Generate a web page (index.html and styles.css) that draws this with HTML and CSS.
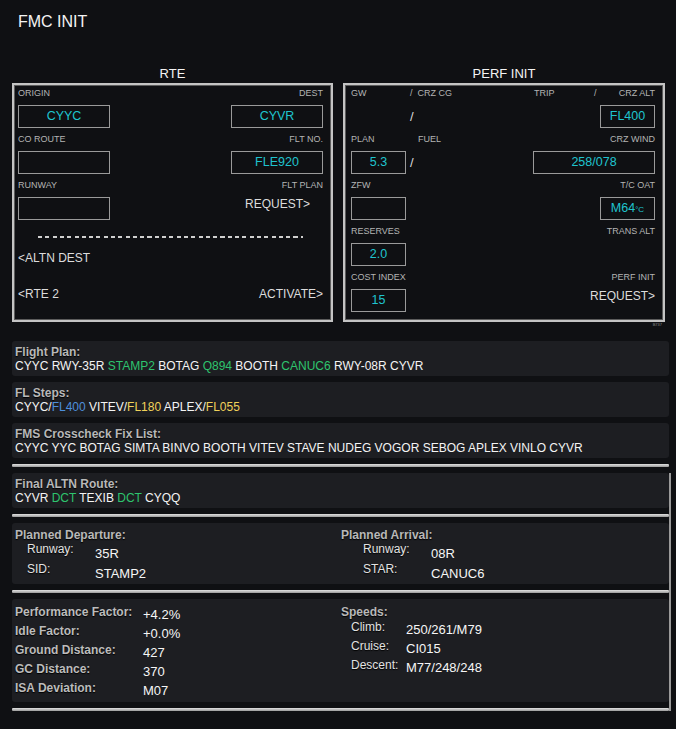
FILE: index.html
```html
<!DOCTYPE html>
<html lang="en">
  <head>
    <meta charset="UTF-8" />
    <meta name="viewport" content="width=device-width, initial-scale=1.0" />
    <title>FMC INIT</title>
    <link rel="stylesheet" href="styles.css">
  </head>
  <body>
    <div class="page">
      <div class="page-head">
        <h1>FMC INIT</h1>
      </div>

      <div class="cdu-row">
        <!-- RTE page -->
        <section class="cdu rte">
          <h2 class="cdu-title">RTE</h2>
          <div class="cdu-box">
            <div class="lbl-row"><span>ORIGIN</span><span>DEST</span></div>
            <div class="fld-row">
              <div class="fld w92">CYYC</div>
              <div class="fld w92">CYVR</div>
            </div>
            <div class="lbl-row"><span>CO ROUTE</span><span>FLT NO.</span></div>
            <div class="fld-row">
              <div class="fld w92"></div>
              <div class="fld w92">FLE920</div>
            </div>
            <div class="lbl-row"><span>RUNWAY</span><span>FLT PLAN</span></div>
            <div class="fld-row">
              <div class="fld w92"></div>
              <div class="act req">REQUEST&gt;</div>
            </div>
            <div class="dash"></div>
            <div class="act-line altn"><span class="act">&lt;ALTN DEST</span></div>
            <div class="act-line rte2"><span class="act">&lt;RTE 2</span><span class="act">ACTIVATE&gt;</span></div>
          </div>
        </section>

        <!-- PERF INIT page -->
        <section class="cdu perf">
          <h2 class="cdu-title">PERF INIT</h2>
          <div class="cdu-box">
            <div class="lbl-row free">
              <span class="c-gw">GW</span><span class="c-cg">/&nbsp; CRZ CG</span><span class="c-trip">TRIP</span><span>/</span><span class="push">CRZ ALT</span>
            </div>
            <div class="fld-row free">
              <span class="slash first">/</span>
              <div class="fld w55 push">FL400</div>
            </div>
            <div class="lbl-row free">
              <span class="c-plan">PLAN</span><span>FUEL</span><span class="push">CRZ WIND</span>
            </div>
            <div class="fld-row free">
              <div class="fld w55">5.3</div>
              <span class="slash">/</span>
              <div class="fld w122 push">258/078</div>
            </div>
            <div class="lbl-row"><span>ZFW</span><span>T/C OAT</span></div>
            <div class="fld-row">
              <div class="fld w55"></div>
              <div class="fld w55">M64<span class="unit">°C</span></div>
            </div>
            <div class="lbl-row"><span>RESERVES</span><span>TRANS ALT</span></div>
            <div class="fld-row">
              <div class="fld w55">2.0</div>
            </div>
            <div class="lbl-row"><span>COST INDEX</span><span>PERF INIT</span></div>
            <div class="fld-row">
              <div class="fld w55">15</div>
              <div class="act">REQUEST&gt;</div>
            </div>
          </div>
          <div class="model">B737</div>
        </section>
      </div>

      <div class="info-list">
        <div class="info">
          <h3>Flight Plan:</h3>
          <p>CYYC RWY-35R <span class="g">STAMP2</span> BOTAG <span class="g">Q894</span> BOOTH <span class="g">CANUC6</span> RWY-08R CYVR</p>
        </div>
        <div class="info">
          <h3>FL Steps:</h3>
          <p>CYYC/<span class="b">FL400</span> VITEV/<span class="y">FL180</span> APLEX/<span class="y">FL055</span></p>
        </div>
        <div class="info">
          <h3>FMS Crosscheck Fix List:</h3>
          <p>CYYC YYC BOTAG SIMTA BINVO BOOTH VITEV STAVE NUDEG VOGOR SEBOG APLEX VINLO CYVR</p>
        </div>
        <div class="bar"></div>

        <div class="lower">
          <div class="info">
            <h3>Final ALTN Route:</h3>
            <p>CYVR <span class="g">DCT</span> TEXIB <span class="g">DCT</span> CYQQ</p>
          </div>
          <div class="bar"></div>

          <div class="info pair proc-box">
            <div>
              <h3>Planned Departure:</h3>
              <dl class="kv proc dep">
                <dt>Runway:</dt><dd>35R</dd>
                <dt>SID:</dt><dd>STAMP2</dd>
              </dl>
            </div>
            <div>
              <h3>Planned Arrival:</h3>
              <dl class="kv proc arr">
                <dt>Runway:</dt><dd>08R</dd>
                <dt>STAR:</dt><dd>CANUC6</dd>
              </dl>
            </div>
          </div>
          <div class="bar"></div>

          <div class="info pair stats-box">
            <dl class="kv stats">
              <dt>Performance Factor:</dt><dd>+4.2%</dd>
              <dt>Idle Factor:</dt><dd>+0.0%</dd>
              <dt>Ground Distance:</dt><dd>427</dd>
              <dt>GC Distance:</dt><dd>370</dd>
              <dt>ISA Deviation:</dt><dd>M07</dd>
            </dl>
            <div>
              <h3>Speeds:</h3>
              <dl class="kv speeds">
                <dt>Climb:</dt><dd>250/261/M79</dd>
                <dt>Cruise:</dt><dd>CI015</dd>
                <dt>Descent:</dt><dd>M77/248/248</dd>
              </dl>
            </div>
          </div>
          <div class="bar"></div>
        </div>
      </div>
    </div>
  </body>
</html>
```

FILE: styles.css
```css
body {
  margin: 0;
  background: #0f1013;
  color: #eeeeee;
  font-family: "Liberation Sans", Arial, sans-serif;
}

.page {
  padding: 0 5px 0 12px;
}

.page-head {
  height: 66px;
}
.page-head h1 {
  margin: 0;
  padding: 12px 0 0 6px;
  font-size: 16px;
  font-weight: normal;
  line-height: 20px;
  color: #f4f4f4;
}

/* CDU pages */
.cdu-row {
  display: flex;
  gap: 10px;
}
.cdu.rte {
  width: 321px;
}
.cdu.perf {
  width: 322px;
}
.cdu-title {
  margin: 0 0 1px;
  font-size: 13px;
  font-weight: normal;
  line-height: 16px;
  text-align: center;
  color: #f4f4f4;
}
.cdu-box {
  box-sizing: border-box;
  height: 239px;
  border: 2px solid #c4c4c4;
  box-shadow: inset 0 0 0 1px #5c5c5c;
  padding: 2px 8px 0 4px;
}
.perf .cdu-box {
  padding-left: 6px;
}

.lbl-row {
  display: flex;
  justify-content: space-between;
  height: 12px;
  line-height: 12px;
  font-size: 9px;
  color: #b4b4b4;
  margin-bottom: 6px;
}
.fld-row {
  display: flex;
  justify-content: space-between;
  align-items: flex-start;
  height: 23px;
  margin-bottom: 5px;
}
/* rows with more than two items are placed from the left */
.lbl-row.free,
.fld-row.free {
  justify-content: flex-start;
}
.free .push {
  margin-left: auto;
}
.c-gw {
  width: 59px;
}
.c-cg {
  width: 124px;
}
.c-trip {
  width: 60px;
}
.c-plan {
  width: 67px;
}

.fld {
  box-sizing: border-box;
  height: 23px;
  border: 1px solid #9a9a9a;
  color: #1fc4cf;
  font-size: 12.5px;
  line-height: 21px;
  text-align: center;
}
.fld.w92 {
  width: 92px;
}
.fld.w55 {
  width: 55px;
}
.fld.w122 {
  width: 122px;
}
.fld .unit {
  font-size: 8px;
}

.slash {
  font-size: 13px;
  line-height: 23px;
  color: #dddddd;
  margin-left: 4px;
}
.slash.first {
  margin-left: 59px;
}

.act {
  font-size: 12px;
  line-height: 14px;
  color: #dcdcdc;
}
.act.req {
  padding-right: 13px;
}

/* the row margin above collapses into this one */
.dash {
  height: 2px;
  margin: 16px 20px 0;
  background: repeating-linear-gradient(90deg, #cfcfcf 0 4px, transparent 4px 7.3px);
}
.act-line {
  display: flex;
  justify-content: space-between;
  line-height: 14px;
}
.act-line.altn {
  margin-top: 13px;
}
.act-line.rte2 {
  margin-top: 22px;
}

.model {
  text-align: right;
  font-size: 4px;
  line-height: 6px;
  color: #8a8a8a;
  padding-right: 3px;
}

/* summary blocks */
.info-list {
  display: flex;
  flex-direction: column;
  gap: 6px;
  margin-top: 13px;
}
.info-list > .info,
.info-list > .bar {
  margin-right: 2px;
}
.lower {
  display: flex;
  flex-direction: column;
  gap: 6px;
  border-right: 2px solid #9a9a9a;
}

.info {
  background: #1d1e22;
  border-radius: 3px;
  padding: 4px 3px 3px;
}
.info h3 {
  margin: 0;
  font-size: 12px;
  font-weight: bold;
  line-height: 14px;
  color: #b8b8b8;
  text-shadow: 0 1px 1px #000;
}
.info p {
  margin: 0;
  font-size: 12px;
  line-height: 14px;
  color: #f4f4f4;
}
.g {
  color: #2ec46e;
}
.b {
  color: #4d8fdc;
}
.y {
  color: #f0d25a;
}

.bar {
  height: 3px;
  border-radius: 1px;
  background: linear-gradient(#e2e2e2, #9a9a9a);
}

.pair {
  display: grid;
  grid-template-columns: 326px 1fr;
}

.kv {
  display: grid;
  margin: 0;
}
.kv dt {
  line-height: 14px;
  font-size: 12px;
  color: #e2e2e2;
  text-shadow: 0 1px 1px #000;
}
.kv dd {
  margin: 0;
  line-height: 14px;
  font-size: 13px;
  color: #f6f6f6;
}

/* planned departure / arrival: values sit a little below their labels */
.proc-box {
  padding: 6px 3px 3px;
}
.proc-box h3 {
  line-height: 12px;
}
.proc {
  grid-template-columns: 68px auto;
  grid-auto-rows: 20px;
}
.proc dt {
  padding-top: 1px;
}
.proc dd {
  padding-top: 6px;
}
.proc.dep {
  margin-left: 12px;
}
.proc.arr {
  margin-left: 22px;
}

.stats-box {
  padding: 6px 3px 2px;
}
.stats {
  grid-template-columns: 128px auto;
  grid-auto-rows: 19px;
}
.stats dt {
  font-weight: bold;
  color: #bcbcbc;
}
.stats dd,
.speeds dd {
  padding-top: 3px;
}
.speeds {
  grid-template-columns: 55px auto;
  grid-auto-rows: 19px;
  margin: 1px 0 0 10px;
}
```
